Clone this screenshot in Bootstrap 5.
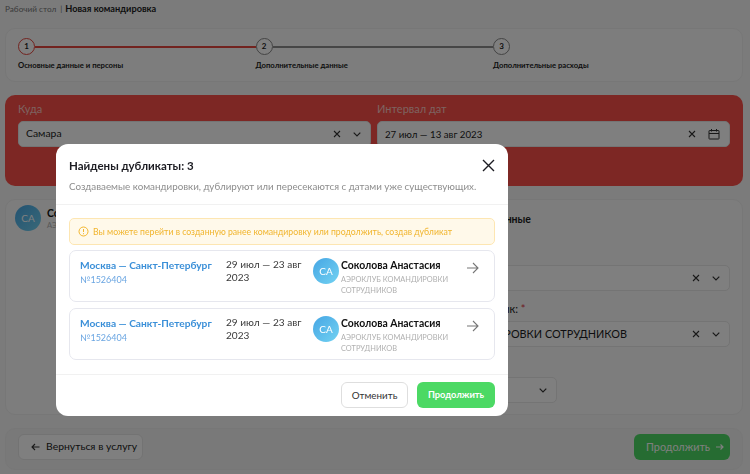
<!DOCTYPE html>
<html lang="ru">

<head>
    <meta charset="UTF-8">
    <meta name="viewport" content="width=device-width, initial-scale=1.0">
    <title>Новая командировка</title>

    <link href="https://cdn.jsdelivr.net/npm/bootstrap@5.3.0/dist/css/bootstrap.min.css" rel="stylesheet">

    <style>
        html, body { height: 100%; overflow: hidden; }
        body {
            background-color: #f6f6f6;
            font-family: "Lato", "Noto Sans", sans-serif;
            font-size: 11px;
            color: #1c1c22;
        }
        .crumbs { height: 28px; padding: 3px 5px 0; font-size: 8.2px; line-height: 12px; }
        .crumbs .first { color: #777; }
        .crumbs .sep { margin: 0 3px 0 4px; color: #777; }
        .crumbs b { font-size: 9.2px; }
        .panel { margin: 0 7px 13px 5px; border-radius: 10px; background: #fafafa; border: 1px solid #efefef; }
        .stepper { height: 54px; padding: 9px 12px 0; }
        .step { width: 237.5px; flex: none; }
        .step-num {
            width: 17px; height: 17px; flex: none; border-radius: 50%; border: 1.5px solid #888;
            font-size: 8px; font-weight: 700; line-height: 14px; text-align: center; background: #fff;
        }
        .step-num.active { border-color: #e5473f; }
        .step-line { height: 2px; flex: 1; background: #8c8c8c; }
        .step-line.active { background: #e5473f; }
        .step-name { font-size: 7.7px; font-weight: 700; line-height: 12px; margin-top: 4px; }
        .red-panel { height: 91px; background: #fb4f48; border: 0; padding: 7px 13px; color: #fbc4c0; gap: 6px; }
        .field-label { font-size: 11px; line-height: 14px; margin-bottom: 5px; }
        .fake-input {
            height: 26px; background: #fff; border: 1px solid #e8e8e8; border-radius: 5px; color: #1c1c22;
            padding: 0 9px 0 7px; font-size: 10.4px;
        }
        .fake-input svg { flex: none; }
        .date-val { font-size: 9.7px; }
        .value-big { font-size: 10.85px; }
        .ic-x { margin-right: 3px; }
        .ic-cal { margin-left: -1px; }
        .ic-x + svg { margin-left: 9px; }
        .person-panel { height: 216px; padding: 5px 12px; gap: 6px; }
        .half { width: 50%; flex: none; flex-shrink: 1; }
        .person-head { margin-left: -3px; gap: 6px; }
        .ava {
            width: 26px; height: 26px; flex: none; border-radius: 50%; color: #fff; font-size: 10px;
            background: linear-gradient(135deg, #46a6e4, #72d2f2);
        }
        .person-name { font-weight: 700; font-size: 10.4px; line-height: 14px; color: #111; white-space: nowrap; }
        .person-org { font-size: 7.4px; line-height: 11px; color: #b0b0b0; }
        .right-title { font-weight: 700; font-size: 10.5px; margin: 7px 0 20px 28px; line-height: 14px; }
        .field-gap { margin-top: 11px; }
        .short-select { width: 180px; }
        .bottom-bar { height: 42px; padding: 5px 12px; margin-bottom: 0; background: #f2f2f2; }
        .btn-back, .btn-next {
            height: 26px; border-radius: 6px; white-space: nowrap;
        }
        .btn-back { background: #fff; border: 1px solid #e6e6e6; color: #1c1c22; width: 125px; font-size: 10.4px; padding: 0 0 0 12px; gap: 6px; }
        .btn-next { background: #4cd964; color: #fff; border: 0; width: 96px; font-size: 10.8px; padding: 0 0 0 12px; gap: 6px; }

        .dim { position: fixed; inset: 0; background: #000; opacity: .5; }
        .dup-wrap { position: fixed; inset: 0; padding: 144px 0 0 56px; }
        .dup-box { width: 452px; height: 272px; background: #fff; border-radius: 12px; overflow: hidden; }
        .dup-head { height: 61px; padding: 13px 13px 0; border-bottom: 1px solid #f1f1f1; }
        .dup-title { font-size: 11.5px; font-weight: 700; line-height: 17px; margin: 0; color: #1c1c22; }
        .dup-sub { font-size: 9.8px; line-height: 14px; color: #8d8d8d; margin: 5px 0 0; white-space: nowrap; }
        .dup-body { height: 170px; padding: 13px 13px 0; border-bottom: 1px solid #f1f1f1; }
        .dup-note {
            height: 27px; border: 1px solid #fde6b2; border-radius: 5px; background: #fff9ea; color: #f1b52e;
            font-size: 8.7px; padding: 0 8px; gap: 4px; margin-bottom: 5px; white-space: nowrap;
        }
        .dup-item {
            height: 52px; border: 1px solid #e6e7ee; border-radius: 7px; margin-bottom: 6px; padding: 7px 15px 0 10px;
        }
        .dup-route { width: 146px; flex: none; }
        .dup-route a { display: block; color: #3a8fd8; font-weight: 700; font-size: 10.2px; line-height: 14px; text-decoration: none; white-space: nowrap; }
        .dup-route span { display: block; color: #6ba6e2; font-size: 9px; line-height: 14px; margin-top: 1px; }
        .dup-date { width: 87px; flex: none; font-size: 10.1px; line-height: 13px; color: #3a3a3a; }
        .dup-who { width: 138px; flex: none; gap: 2px; }
        .dup-who .person-org { width: 114px; margin-top: 2px; }
        .dup-arrow { margin: 4px 0 0 auto; flex: none; }
        .dup-foot { padding: 7px 13px; gap: 9px; }
        .btn-cancel, .btn-go { height: 26px; border-radius: 6px; font-size: 9.8px; padding: 0; }
        .btn-cancel { width: 67px; background: #fff; border: 1px solid #dedede; color: #333; }
        .btn-go { width: 78px; background: #4cd964; color: #fff; border: 0; font-weight: 700; font-size: 9.3px; }
    </style>
</head>

<body>
    <div class="crumbs"><span class="first">Рабочий стол</span><span class="sep">|</span><b>Новая командировка</b></div>

    <div class="panel stepper d-flex">
        <div class="step">
            <div class="d-flex align-items-center"><div class="step-num active">1</div><div class="step-line active"></div></div>
            <div class="step-name">Основные данные и персоны</div>
        </div>
        <div class="step">
            <div class="d-flex align-items-center"><div class="step-num">2</div><div class="step-line"></div></div>
            <div class="step-name">Дополнительные данные</div>
        </div>
        <div class="step">
            <div class="d-flex align-items-center"><div class="step-num">3</div></div>
            <div class="step-name">Дополнительные расходы</div>
        </div>
    </div>

    <div class="panel red-panel d-flex">
        <div class="half">
            <div class="field-label">Куда</div>
            <div class="fake-input d-flex align-items-center">
                <span class="flex-fill">Самара</span>
                <svg class="ic-x" width="8" height="8" viewBox="0 0 8 8"><path d="M1 1l6 6M7 1L1 7" stroke="#333" stroke-width="1.1"/></svg>
                <svg width="8" height="5" viewBox="0 0 8 5"><path d="M.7.7L4 4 7.300.7" fill="none" stroke="#333" stroke-width="1.2"/></svg>
            </div>
        </div>
        <div class="half">
            <div class="field-label">Интервал дат</div>
            <div class="fake-input d-flex align-items-center">
                <span class="flex-fill date-val">27 июл — 13 авг 2023</span>
                <svg class="ic-x" width="8" height="8" viewBox="0 0 8 8"><path d="M1 1l6 6M7 1L1 7" stroke="#333" stroke-width="1.1"/></svg>
                <svg class="ic-cal" width="12" height="12" viewBox="0 0 12 12"><path d="M1.500 2.500h9a.5.5 0 0 1 .5.5v7.500a.5.5 0 0 1-.5.5h-9a.5.5 0 0 1-.5-.5V3a.5.5 0 0 1 .5-.5zM1 5.500h10M3.500 1v2.500M8.500 1v2.500" fill="none" stroke="#333"/></svg>
            </div>
        </div>
    </div>

    <div class="panel person-panel d-flex">
        <div class="half">
            <div class="person-head d-flex align-items-center">
                <div class="ava d-flex align-items-center justify-content-center">СА</div>
                <div>
                    <div class="person-name">Соколова Анастасия</div>
                    <div class="person-org">АЭРОКЛУБ КОМАНДИРОВКИ СОТРУДНИКОВ</div>
                </div>
            </div>
        </div>
        <div class="half">
            <div class="right-title">Дополнительные данные</div>
            <div class="field-label">Проект</div>
            <div class="fake-input d-flex align-items-center justify-content-end">
                <svg class="ic-x" width="8" height="8" viewBox="0 0 8 8"><path d="M1 1l6 6M7 1L1 7" stroke="#333" stroke-width="1.1"/></svg>
                <svg width="8" height="5" viewBox="0 0 8 5"><path d="M.7.7L4 4 7.300.7" fill="none" stroke="#333" stroke-width="1.2"/></svg>
            </div>
            <div class="field-label field-gap">Организация - плательщик: <span class="text-danger">*</span></div>
            <div class="fake-input d-flex align-items-center">
                <span class="flex-fill text-nowrap value-big">АЭРОКЛУБ КОМАНДИРОВКИ СОТРУДНИКОВ</span>
                <svg class="ic-x" width="8" height="8" viewBox="0 0 8 8"><path d="M1 1l6 6M7 1L1 7" stroke="#333" stroke-width="1.1"/></svg>
                <svg width="8" height="5" viewBox="0 0 8 5"><path d="M.7.7L4 4 7.300.7" fill="none" stroke="#333" stroke-width="1.2"/></svg>
            </div>
            <div class="field-label field-gap">Цель поездки</div>
            <div class="fake-input short-select d-flex align-items-center justify-content-end">
                <svg width="8" height="5" viewBox="0 0 8 5"><path d="M.7.7L4 4 7.300.7" fill="none" stroke="#333" stroke-width="1.2"/></svg>
            </div>
        </div>
    </div>

    <div class="panel bottom-bar d-flex justify-content-between">
        <button class="btn btn-back d-flex align-items-center">
            <svg width="9" height="8" viewBox="0 0 9 8"><path d="M8.500 4H1M4 1L1 4l3 3" fill="none" stroke="#333" stroke-width="1.100"/></svg>
            Вернуться в услугу
        </button>
        <button class="btn btn-next d-flex align-items-center">
            Продолжить
            <svg width="8" height="8" viewBox="0 0 8 8"><path d="M0 4h7M4.500 1.500L7 4 4.500 6.500" fill="none" stroke="#fff" stroke-width="1.200"/></svg>
        </button>
    </div>

    <div class="dim"></div>
    <div class="dup-wrap">
        <div class="dup-box">
            <div class="dup-head">
                <div class="d-flex justify-content-between align-items-center">
                    <h5 class="dup-title">Найдены дубликаты: 3</h5>
                    <svg width="13" height="13" viewBox="0 0 13 13"><path d="M1 1l11 11M12 1L1 12" stroke="#1c1c22" stroke-width="1.400"/></svg>
                </div>
                <p class="dup-sub">Создаваемые командировки, дублируют или пересекаются с датами уже существующих.</p>
            </div>
            <div class="dup-body">
                <div class="dup-note d-flex align-items-center">
                    <svg width="11" height="11" viewBox="0 0 11 11"><circle cx="5.500" cy="5.500" r="4.500" fill="none" stroke="#f1b52e"/><path d="M5.500 3v3M5.500 7.200v1" stroke="#f1b52e"/></svg>
                    Вы можете перейти в созданную ранее командировку или продолжить, создав дубликат
                </div>
                <div class="dup-item d-flex">
                    <div class="dup-route"><a href="#">Москва — Санкт-Петербург</a><span>№1526404</span></div>
                    <div class="dup-date">29 июл — 23 авг 2023</div>
                    <div class="dup-who d-flex">
                        <div class="ava d-flex align-items-center justify-content-center">СА</div>
                        <div>
                            <div class="person-name">Соколова Анастасия</div>
                            <div class="person-org">АЭРОКЛУБ КОМАНДИРОВКИ СОТРУДНИКОВ</div>
                        </div>
                    </div>
                    <svg class="dup-arrow" width="12" height="12" viewBox="0 0 12 12"><path d="M0 6h11M6 1l5 5-5 5" fill="none" stroke="#777" stroke-width="1.100"/></svg>
                </div>
                <div class="dup-item d-flex">
                    <div class="dup-route"><a href="#">Москва — Санкт-Петербург</a><span>№1526404</span></div>
                    <div class="dup-date">29 июл — 23 авг 2023</div>
                    <div class="dup-who d-flex">
                        <div class="ava d-flex align-items-center justify-content-center">СА</div>
                        <div>
                            <div class="person-name">Соколова Анастасия</div>
                            <div class="person-org">АЭРОКЛУБ КОМАНДИРОВКИ СОТРУДНИКОВ</div>
                        </div>
                    </div>
                    <svg class="dup-arrow" width="12" height="12" viewBox="0 0 12 12"><path d="M0 6h11M6 1l5 5-5 5" fill="none" stroke="#777" stroke-width="1.100"/></svg>
                </div>
            </div>
            <div class="dup-foot d-flex justify-content-end">
                <button class="btn btn-cancel">Отменить</button>
                <button class="btn btn-go">Продолжить</button>
            </div>
        </div>
    </div>

    <script src="https://cdn.jsdelivr.net/npm/bootstrap@5.3.0/dist/js/bootstrap.bundle.min.js"></script>
</body>

</html>
